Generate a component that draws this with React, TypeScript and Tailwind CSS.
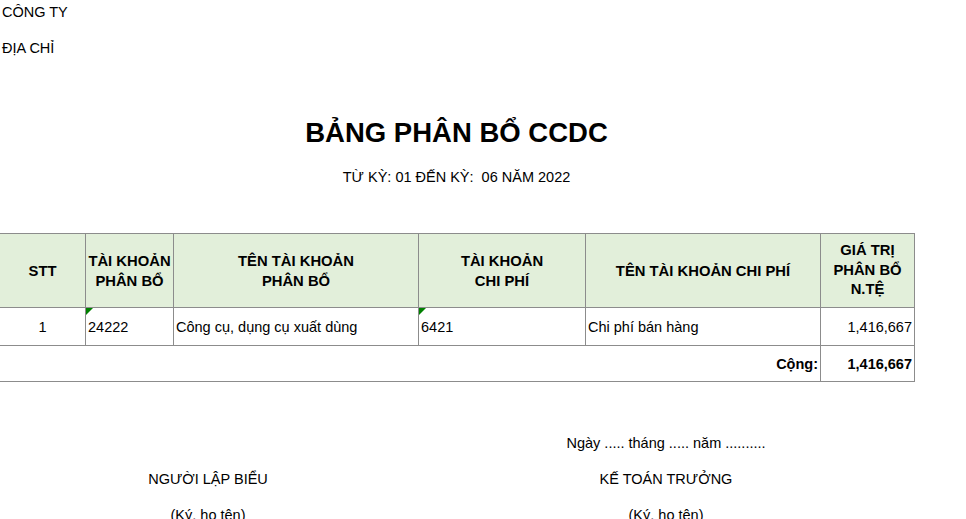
import * as React from "react";

const cols = [86, 88, 245, 167, 235, 94];

const Tick = () => (
  <span className="absolute left-0 top-0 w-0 h-0 border-t-[7px] border-r-[7px] border-t-[#008000] border-r-transparent" />
);

const App = () => {
  return (
    <main
      className="w-[966px] h-[519px] overflow-hidden bg-white text-black text-[14.5px] leading-4"
      style={{ fontFamily: '"Liberation Sans", Arial, sans-serif' }}
    >
      <div className="pl-[2px] pt-[4px]">CÔNG TY</div>
      <div className="pl-[2px] pt-[20px]">ĐỊA CHỈ</div>

      <div className="w-[913px]">
        <h1 className="text-center font-bold text-[27.5px] leading-8 mt-[61px]">BẢNG PHÂN BỔ CCDC</h1>
        <p className="text-center mt-[20px] whitespace-pre">TỪ KỲ: 01 ĐẾN KỲ:  06 NĂM 2022</p>
      </div>

      <table className="table-fixed border-collapse mt-[48px] -ml-[1px]" style={{ width: 916 }}>
        <colgroup>
          {cols.map((w, i) => (
            <col key={i} style={{ width: w }} />
          ))}
        </colgroup>
        <thead>
          <tr className="h-[74px] bg-[#e2efda] text-[14.8px] leading-5 text-center">
            <th className="border border-[#8c8c8c] font-bold">STT</th>
            <th className="border border-[#8c8c8c] font-bold">TÀI KHOẢN<br />PHÂN BỔ</th>
            <th className="border border-[#8c8c8c] font-bold">TÊN TÀI KHOẢN<br />PHÂN BỔ</th>
            <th className="border border-[#8c8c8c] font-bold">TÀI KHOẢN<br />CHI PHÍ</th>
            <th className="border border-[#8c8c8c] font-bold">TÊN TÀI KHOẢN CHI PHÍ</th>
            <th className="border border-[#8c8c8c] font-bold leading-[19.5px]">GIÁ TRỊ<br />PHÂN BỔ<br />N.TỆ</th>
          </tr>
        </thead>
        <tbody>
          <tr className="h-[38px]">
            <td className="border border-[#8c8c8c] text-center">1</td>
            <td className="relative border border-[#8c8c8c] pl-[2px]">
              <Tick />
              24222
            </td>
            <td className="border border-[#8c8c8c] pl-[2px]">Công cụ, dụng cụ xuất dùng</td>
            <td className="relative border border-[#8c8c8c] pl-[2px]">
              <Tick />
              6421
            </td>
            <td className="border border-[#8c8c8c] pl-[2px]">Chi phí bán hàng</td>
            <td className="border border-[#8c8c8c] text-right pr-[2px]">1,416,667</td>
          </tr>
          <tr className="h-[36px] font-bold">
            <td colSpan={5} className="border border-[#8c8c8c] text-right pr-[2px]">Cộng:</td>
            <td className="border border-[#8c8c8c] text-right pr-[2px]">1,416,667</td>
          </tr>
        </tbody>
      </table>

      <div className="flex mt-[53px]">
        <div className="w-[416px] flex flex-col items-center">
          <div className="h-4" />
          <div className="mt-[20px]">NGƯỜI LẬP BIỂU</div>
          <div className="mt-[20px]">(Ký, họ tên)</div>
        </div>
        <div className="w-[500px] flex flex-col items-center">
          <div className="whitespace-pre">Ngày ..... tháng ..... năm ..........</div>
          <div className="mt-[20px]">KẾ TOÁN TRƯỞNG</div>
          <div className="mt-[20px]">(Ký, họ tên)</div>
        </div>
      </div>
    </main>
  );
};

export default App;
